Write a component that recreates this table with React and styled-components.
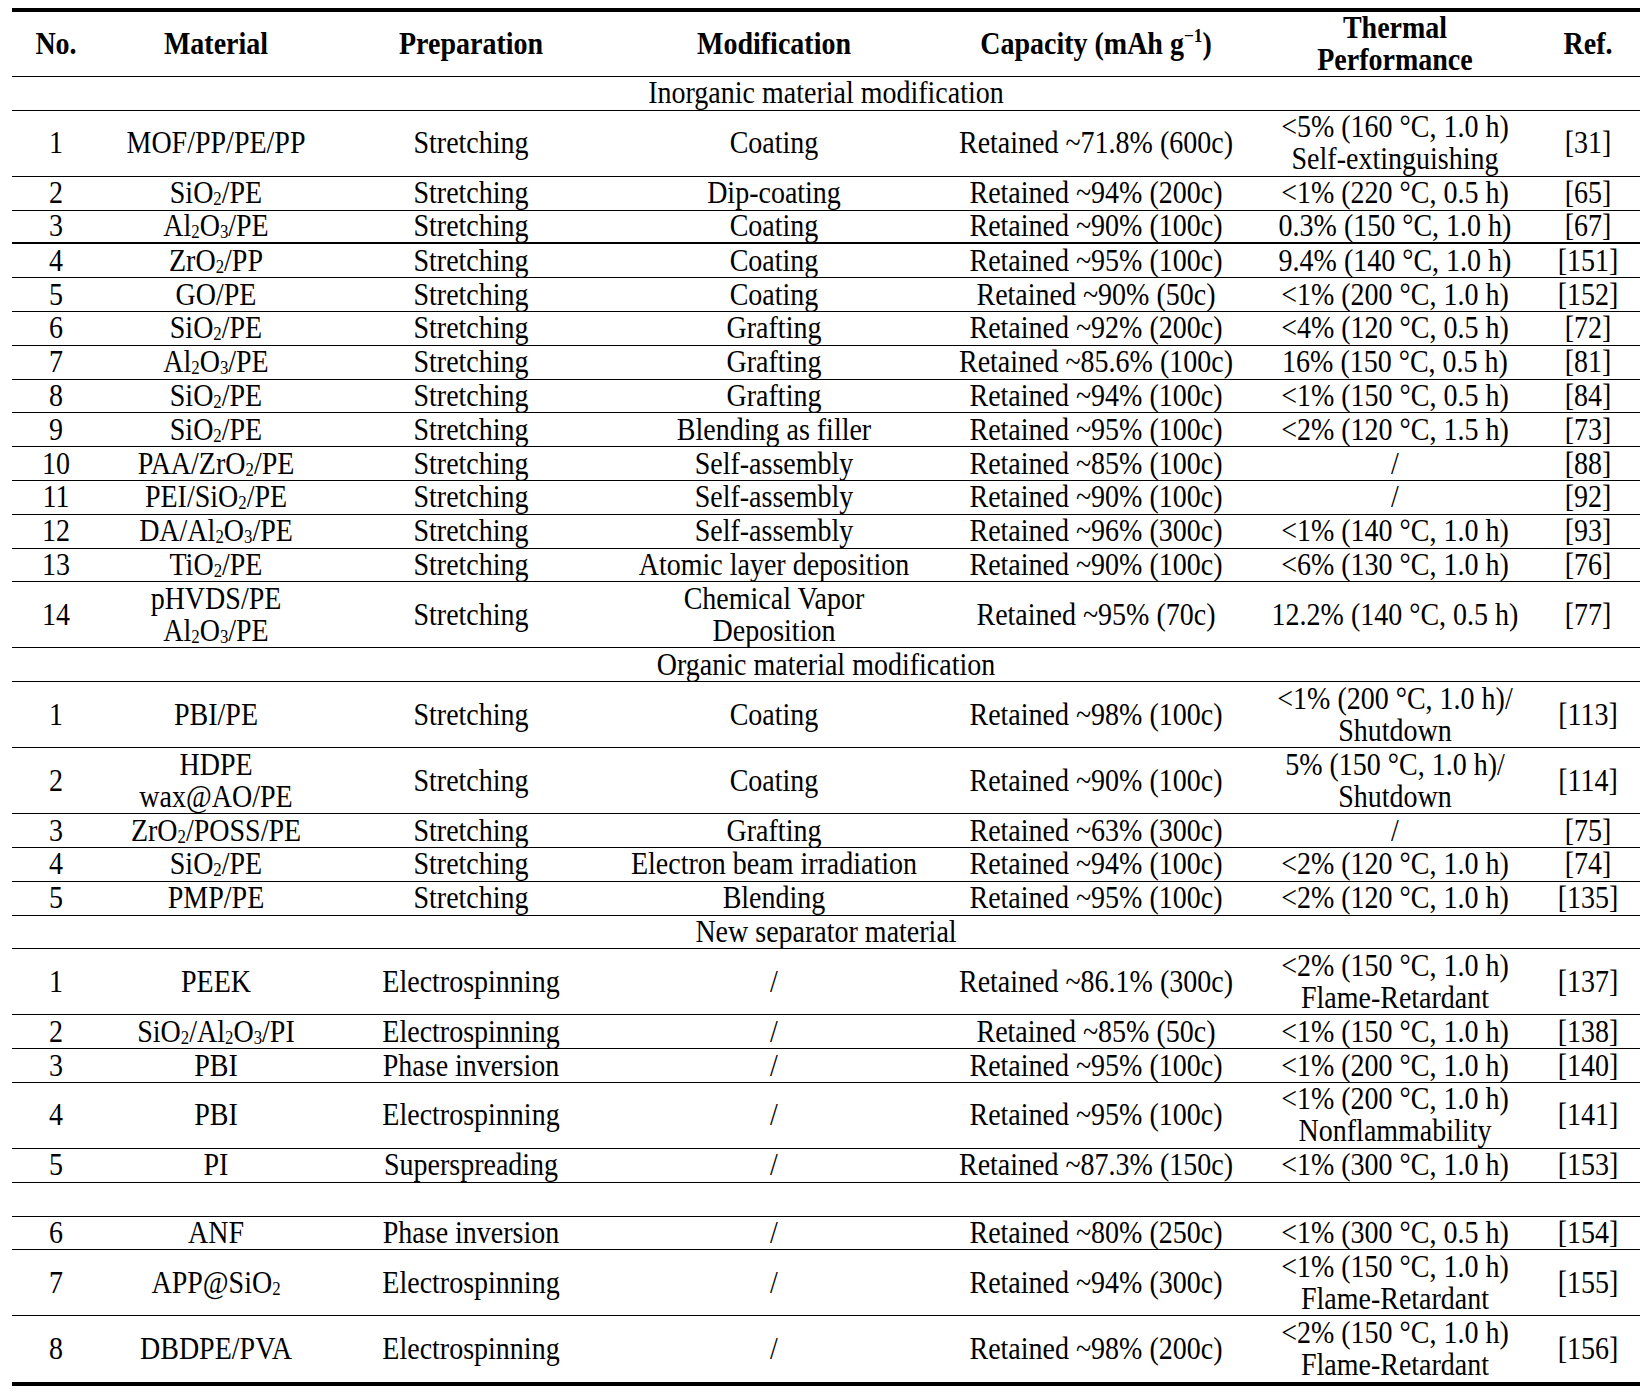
import React from "react";
import styled, { createGlobalStyle } from "styled-components";

const GlobalStyle = createGlobalStyle`
  body {
    margin: 0;
    background: #fff;
    color: #000;
    font-family: "Liberation Serif", "Times New Roman", serif;
  }
`;

const COLS = "88px 232px 278px 328px 316px 282px 104px";
const SINGLE = 33.8;
const TALL = 66;

const sections = [
  {
    title: "Inorganic material modification",
    rows: [
      ["1", "MOF/PP/PE/PP", "Stretching", "Coating", "Retained ~71.8% (600c)", "<5% (160 °C, 1.0 h)\nSelf-extinguishing", "[31]"],
      ["2", "SiO_2/PE", "Stretching", "Dip-coating", "Retained ~94% (200c)", "<1% (220 °C, 0.5 h)", "[65]"],
      ["3", "Al_2O_3/PE", "Stretching", "Coating", "Retained ~90% (100c)", "0.3% (150 °C, 1.0 h)", "[67]", 2],
      ["4", "ZrO_2/PP", "Stretching", "Coating", "Retained ~95% (100c)", "9.4% (140 °C, 1.0 h)", "[151]"],
      ["5", "GO/PE", "Stretching", "Coating", "Retained ~90% (50c)", "<1% (200 °C, 1.0 h)", "[152]"],
      ["6", "SiO_2/PE", "Stretching", "Grafting", "Retained ~92% (200c)", "<4% (120 °C, 0.5 h)", "[72]"],
      ["7", "Al_2O_3/PE", "Stretching", "Grafting", "Retained ~85.6% (100c)", "16% (150 °C, 0.5 h)", "[81]"],
      ["8", "SiO_2/PE", "Stretching", "Grafting", "Retained ~94% (100c)", "<1% (150 °C, 0.5 h)", "[84]"],
      ["9", "SiO_2/PE", "Stretching", "Blending as filler", "Retained ~95% (100c)", "<2% (120 °C, 1.5 h)", "[73]"],
      ["10", "PAA/ZrO_2/PE", "Stretching", "Self-assembly", "Retained ~85% (100c)", "/", "[88]"],
      ["11", "PEI/SiO_2/PE", "Stretching", "Self-assembly", "Retained ~90% (100c)", "/", "[92]"],
      ["12", "DA/Al_2O_3/PE", "Stretching", "Self-assembly", "Retained ~96% (300c)", "<1% (140 °C, 1.0 h)", "[93]"],
      ["13", "TiO_2/PE", "Stretching", "Atomic layer deposition", "Retained ~90% (100c)", "<6% (130 °C, 1.0 h)", "[76]"],
      ["14", "pHVDS/PE\nAl_2O_3/PE", "Stretching", "Chemical Vapor\nDeposition", "Retained ~95% (70c)", "12.2% (140 °C, 0.5 h)", "[77]"],
    ],
  },
  {
    title: "Organic material modification",
    rows: [
      ["1", "PBI/PE", "Stretching", "Coating", "Retained ~98% (100c)", "<1% (200 °C, 1.0 h)/\nShutdown", "[113]"],
      ["2", "HDPE\nwax@AO/PE", "Stretching", "Coating", "Retained ~90% (100c)", "5% (150 °C, 1.0 h)/\nShutdown", "[114]"],
      ["3", "ZrO_2/POSS/PE", "Stretching", "Grafting", "Retained ~63% (300c)", "/", "[75]"],
      ["4", "SiO_2/PE", "Stretching", "Electron beam irradiation", "Retained ~94% (100c)", "<2% (120 °C, 1.0 h)", "[74]"],
      ["5", "PMP/PE", "Stretching", "Blending", "Retained ~95% (100c)", "<2% (120 °C, 1.0 h)", "[135]"],
    ],
  },
  {
    title: "New separator material",
    rows: [
      ["1", "PEEK", "Electrospinning", "/", "Retained ~86.1% (300c)", "<2% (150 °C, 1.0 h)\nFlame-Retardant", "[137]"],
      ["2", "SiO_2/Al_2O_3/PI", "Electrospinning", "/", "Retained ~85% (50c)", "<1% (150 °C, 1.0 h)", "[138]"],
      ["3", "PBI", "Phase inversion", "/", "Retained ~95% (100c)", "<1% (200 °C, 1.0 h)", "[140]"],
      ["4", "PBI", "Electrospinning", "/", "Retained ~95% (100c)", "<1% (200 °C, 1.0 h)\nNonflammability", "[141]"],
      ["5", "PI", "Superspreading", "/", "Retained ~87.3% (150c)", "<1% (300 °C, 1.0 h)", "[153]"],
      ["", "", "", "", "", "", ""],
      ["6", "ANF", "Phase inversion", "/", "Retained ~80% (250c)", "<1% (300 °C, 0.5 h)", "[154]"],
      ["7", "APP@SiO_2", "Electrospinning", "/", "Retained ~94% (300c)", "<1% (150 °C, 1.0 h)\nFlame-Retardant", "[155]"],
      ["8", "DBDPE/PVA", "Electrospinning", "/", "Retained ~98% (200c)", "<2% (150 °C, 1.0 h)\nFlame-Retardant", "[156]"],
    ],
  },
];

// "_2" -> subscript, "\n" -> line break
const rich = (s) =>
  s.split("\n").map((line, i) => (
    <React.Fragment key={i}>
      {i > 0 && <br />}
      {line.split(/_(\d)/).map((part, j) => (j % 2 ? <Sub key={j}>{part}</Sub> : part))}
    </React.Fragment>
  ));

const App = () => {
  const last = sections[sections.length - 1].rows.length - 1;
  return (
    <Page>
      <GlobalStyle />
      <Table>
        <Row $h={65} $rule={1}>
          <Cell $bold><Txt>No.</Txt></Cell>
          <Cell $bold><Txt>Material</Txt></Cell>
          <Cell $bold><Txt>Preparation</Txt></Cell>
          <Cell $bold><Txt>Modification</Txt></Cell>
          <Cell $bold><Txt>Capacity (mAh g<Sup>−1</Sup>)</Txt></Cell>
          <Cell $bold><Txt>Thermal<br />Performance</Txt></Cell>
          <Cell $bold><Txt>Ref.</Txt></Cell>
        </Row>
        {sections.map((sec, si) => (
          <React.Fragment key={sec.title}>
            <SectionRow>
              <Txt>{sec.title}</Txt>
            </SectionRow>
            {sec.rows.map((r, ri) => {
              const tall = r.slice(0, 7).some((c) => c.includes("\n"));
              const isLast = si === sections.length - 1 && ri === last;
              return (
                <Row key={ri} $h={tall ? TALL : SINGLE} $rule={isLast ? 0 : r[7] || 1}>
                  {r.slice(0, 7).map((c, ci) => (
                    <Cell key={ci}><Txt>{rich(c)}</Txt></Cell>
                  ))}
                </Row>
              );
            })}
          </React.Fragment>
        ))}
      </Table>
    </Page>
  );
};

const Page = styled.div`
  padding: 8px 0 0 12px;
`;

const Table = styled.div`
  width: 1628px;
  border-top: 4px solid #000;
  border-bottom: 4px solid #000;
`;

const Row = styled.div`
  display: grid;
  grid-template-columns: ${COLS};
  box-sizing: border-box;
  height: ${(p) => p.$h}px;
  border-bottom: ${(p) => p.$rule}px solid #000;
`;

const SectionRow = styled.div`
  display: flex;
  align-items: center;
  justify-content: center;
  box-sizing: border-box;
  height: ${SINGLE}px;
  border-bottom: 1px solid #000;
  font-size: 28px;
`;

const Cell = styled.div`
  display: flex;
  align-items: center;
  justify-content: center;
  text-align: center;
  white-space: nowrap;
  font-size: 28px;
  font-weight: ${(p) => (p.$bold ? 700 : 400)};
`;

const Txt = styled.span`
  display: inline-block;
  line-height: 28px;
  transform: scaleY(1.12);
`;

const Sub = styled.sub`
  font-size: 0.6em;
  line-height: 0;
  vertical-align: -0.1em;
`;

const Sup = styled.sup`
  font-size: 0.62em;
  line-height: 0;
  vertical-align: 0.6em;
`;

export default App;
